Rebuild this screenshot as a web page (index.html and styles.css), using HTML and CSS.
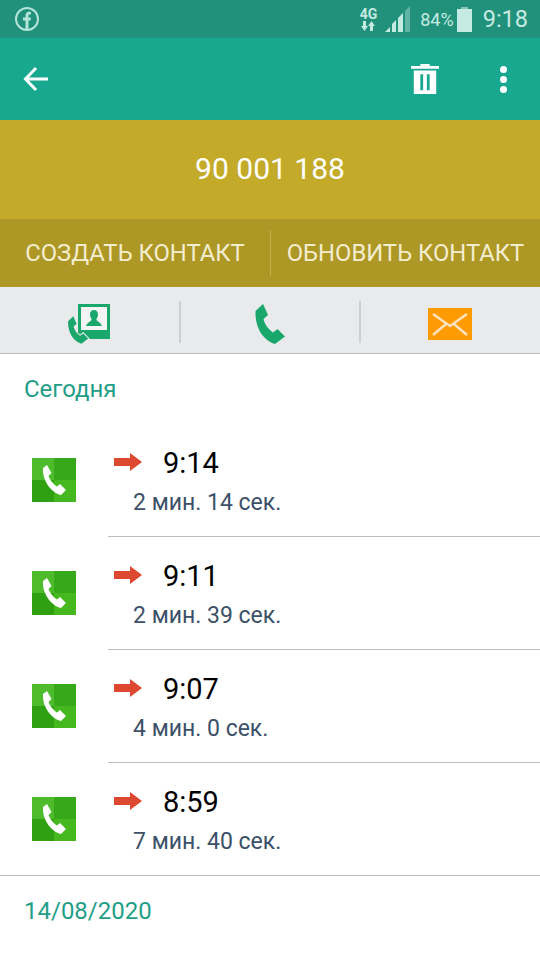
FILE: index.html
```html
<!DOCTYPE html>
<html lang="ru">
<head>
  <meta charset="UTF-8">
  <meta name="viewport" content="width=device-width, initial-scale=1.0">
  <title>Журнал вызовов</title>
  <link rel="stylesheet" href="styles.css">
</head>
<body>
  <svg class="defs" width="0" height="0">
    <symbol id="handset" viewBox="-2 -2 34 44">
      <path d="M8 0 L13 11 L8.500 15 C9.500 20 13 25 18 28.500 L22.500 25 L30 32.500 L20 40 C8 36 0 24 0.500 7 Z"/>
    </symbol>
    <symbol id="call-tile" viewBox="0 0 44 44">
      <rect width="44" height="44" fill="#3db01f"/>
      <rect width="22" height="22" fill="#4dbb2c"/>
      <rect x="22" width="22" height="22" fill="#36a91a"/>
      <rect y="22" width="22" height="22" fill="#2fa012"/>
      <rect x="22" y="22" width="22" height="22" fill="#44b81e"/>
      <path fill="#fff" d="M15 7 L19.500 15 L16.500 18 C17.500 21 21 26 25 28.500 L28 26 L34 32 L29 37 C20 35 10 23 11 10 Z"/>
    </symbol>
    <symbol id="out-arrow" viewBox="0 0 28 18">
      <path fill="#dc4830" d="M0 5 H16 V0 L28 9 L16 18 V13 H0 Z"/>
    </symbol>
  </svg>

  <div class="status-bar">
    <svg class="fb-icon" width="26" height="26" viewBox="0 0 26 26">
      <circle cx="13" cy="13" r="11" fill="none" stroke="#b5e4d9" stroke-width="2"/>
      <path fill="#b5e4d9" d="M11.500 23 V14.500 H9 V11.500 H11.500 V9.500 C11.500 7 13 5.800 15 5.800 C16 5.800 17 6 17 6 V8.500 H15.800 C14.700 8.500 14.500 9 14.500 9.800 V11.500 H17 L16.500 14.500 H14.500 V23 Z"/>
    </svg>
    <div class="status-right">
      <div class="net">
        <span class="net-label">4G</span>
        <svg width="14" height="10" viewBox="0 0 14 10">
          <path fill="#c5eae1" d="M2 0 H5 V5 H7 L3.500 10 L0 5 H2 Z M9 10 H12 V5 H14 L10.500 0 L7 5 H9 Z"/>
        </svg>
      </div>
      <svg class="signal" width="26" height="26" viewBox="0 0 26 26">
        <path fill="#c5eae1" d="M0 26 L5 21 V26 Z M7 26 V18 L11 14 V26 Z M13 26 V12 L18 7 V26 Z"/>
        <path fill="#c5eae1" fill-opacity="0.4" d="M20 26 V5 L25 0 V26 Z"/>
      </svg>
      <span class="battery-pct">84%</span>
      <div class="battery"></div>
      <span class="clock">9:18</span>
    </div>
  </div>

  <div class="toolbar">
    <svg width="26" height="26" viewBox="0 0 26 26" class="back">
      <path fill="none" stroke="#fff" stroke-width="3" d="M25 13 H3 M13 2 L2.500 13 L13 24"/>
    </svg>
    <div class="toolbar-right">
      <svg width="28" height="30" viewBox="0 0 30 32">
        <path fill="#fff" d="M10 0 H20 V2 H30 V5 H0 V2 H10 Z M3 7 H27 V32 H3 Z"/>
        <path fill="#17a88f" d="M10 11 H13 V28 H10 Z M17 11 H20 V28 H17 Z"/>
      </svg>
      <div class="dots"><i></i><i></i><i></i></div>
    </div>
  </div>

  <div class="number-band">90 001 188</div>

  <div class="contact-actions">
    <div class="contact-btn">СОЗДАТЬ КОНТАКТ</div>
    <div class="contact-btn">ОБНОВИТЬ КОНТАКТ</div>
  </div>

  <div class="quick-actions">
    <div class="quick-cell">
      <svg width="44" height="40" viewBox="0 0 44 40">
        <path fill="#1aa76c" d="M11 0 H43 V35 H11 Z"/>
        <rect x="14" y="3" width="26" height="23" fill="#f2f5f4"/>
        <path fill="#1aa76c" d="M27 6 C29.500 6 31 8 31 10.500 C31 13 29.700 14.500 29.300 15.500 C30 17.500 33.500 18 35 22 H19 C20.500 18 24 17.500 24.700 15.500 C24.300 14.500 23 13 23 10.500 C23 8 24.500 6 27 6 Z"/>
        <use href="#handset" class="handset-cut" x="-1" y="11" width="24" height="30" fill="#1aa76c"/>
      </svg>
    </div>
    <div class="quick-cell">
      <svg width="34" height="44"><use href="#handset" width="34" height="44" fill="#1aa76c"/></svg>
    </div>
    <div class="quick-cell mail-cell">
      <svg width="44" height="32" viewBox="0 0 44 32">
        <rect width="44" height="32" fill="#fe9a04"/>
        <path fill="none" stroke="#fde3bd" stroke-width="2.500" d="M5 6 L22 18 L39 6 M5 27 L18 16 M39 27 L26 16"/>
      </svg>
    </div>
  </div>

  <div class="day-label">Сегодня</div>

  <div class="call-list">
    <div class="call-row">
      <div class="call-icon"><svg width="44" height="44"><use href="#call-tile"/></svg></div>
      <div class="call-body">
        <div class="call-top"><svg width="28" height="18"><use href="#out-arrow"/></svg><span class="call-time">9:14</span></div>
        <div class="call-length">2 мин. 14 сек.</div>
      </div>
    </div>
    <div class="call-row">
      <div class="call-icon"><svg width="44" height="44"><use href="#call-tile"/></svg></div>
      <div class="call-body">
        <div class="call-top"><svg width="28" height="18"><use href="#out-arrow"/></svg><span class="call-time">9:11</span></div>
        <div class="call-length">2 мин. 39 сек.</div>
      </div>
    </div>
    <div class="call-row">
      <div class="call-icon"><svg width="44" height="44"><use href="#call-tile"/></svg></div>
      <div class="call-body">
        <div class="call-top"><svg width="28" height="18"><use href="#out-arrow"/></svg><span class="call-time">9:07</span></div>
        <div class="call-length">4 мин. 0 сек.</div>
      </div>
    </div>
    <div class="call-row last">
      <div class="call-icon"><svg width="44" height="44"><use href="#call-tile"/></svg></div>
      <div class="call-body">
        <div class="call-top"><svg width="28" height="18"><use href="#out-arrow"/></svg><span class="call-time">8:59</span></div>
        <div class="call-length">7 мин. 40 сек.</div>
      </div>
    </div>
  </div>

  <div class="day-label next">14/08/2020</div>
</body>
</html>
```

FILE: styles.css
```css
* {
  box-sizing: border-box;
}

html, body {
  height: 960px;
  overflow: hidden;
}

body {
  margin: 0;
  background: #fff;
  font-family: Roboto, "Noto Sans", sans-serif;
}

.defs {
  display: block;
  height: 0;
}

.status-bar {
  height: 38px;
  background: #21917c;
  display: flex;
  align-items: center;
  justify-content: space-between;
  padding: 0 12px 0 14px;
  color: #c5eae1;
}

.status-right {
  display: flex;
  align-items: center;
}

.net {
  display: flex;
  flex-direction: column;
  align-items: center;
  margin-right: 8px;
}

.net-label {
  font-size: 14px;
  font-weight: 700;
  line-height: 14px;
}

.signal {
  margin-right: 9px;
}

.battery-pct {
  font-size: 18px;
  margin-right: 3px;
}

.battery {
  width: 15px;
  height: 23px;
  margin-top: 2px;
  background: #c5eae1;
  position: relative;
  margin-right: 11px;
}

.battery::before {
  content: "";
  position: absolute;
  top: -2px;
  left: 4px;
  width: 7px;
  height: 2px;
  background: #c5eae1;
  opacity: 0.6;
}

.clock {
  font-size: 23.5px;
}

.toolbar {
  height: 82px;
  background: #17a88f;
  display: flex;
  align-items: center;
  justify-content: space-between;
  padding: 0 33px 0 23px;
}

.toolbar-right {
  display: flex;
  align-items: center;
  gap: 61px;
}

.dots {
  display: flex;
  flex-direction: column;
  gap: 3px;
}

.dots i {
  display: block;
  width: 7px;
  height: 7px;
  border-radius: 50%;
  background: #fff;
}

.number-band {
  height: 99px;
  padding-bottom: 2px;
  background: #c3aa29;
  color: #fff;
  font-size: 30px;
  display: flex;
  align-items: center;
  justify-content: center;
}

.contact-actions {
  height: 68px;
  background: #ad9725;
  display: flex;
  align-items: center;
}

.contact-btn {
  color: #f3edcf;
  font-size: 23.8px;
  white-space: nowrap;
  height: 46px;
  display: flex;
  align-items: center;
  justify-content: center;
  width: 270px;
}

.contact-btn + .contact-btn {
  border-left: 1px solid #c3b050;
}

.quick-actions {
  height: 67px;
  padding-top: 3px;
  background: #e8eaeb;
  border-bottom: 1px solid #bcbfc0;
  display: flex;
  align-items: center;
}

.quick-cell {
  flex: 1;
  height: 42px;
  display: flex;
  align-items: center;
  justify-content: center;
}

.quick-cell svg {
  margin-top: 4px;
}

.mail-cell svg {
  margin-right: 2px;
}

.handset-cut {
  stroke: #e8eaeb;
  stroke-width: 3px;
  paint-order: stroke;
}

.quick-cell + .quick-cell {
  border-left: 2px solid #cdcfd0;
}

.day-label {
  height: 70px;
  padding: 0 24px;
  display: flex;
  align-items: center;
  color: #1f9e87;
  font-size: 24px;
}

.day-label.next {
  height: 70px;
}

.call-row {
  height: 113px;
  display: flex;
}

.call-icon {
  width: 108px;
  padding: 0 0 1px 32px;
  display: flex;
  align-items: center;
}

.call-icon svg {
  display: block;
}

.call-body {
  flex: 1;
  border-bottom: 1px solid #bcbfc0;
  padding: 20px 0 0 6px;
}

.call-row.last {
  border-bottom: 1px solid #bcbfc0;
}

.call-row.last .call-body {
  border-bottom: none;
}

.call-top {
  display: flex;
  align-items: center;
  gap: 21px;
  height: 36px;
}

.call-time {
  font-size: 29px;
  color: #000;
  padding-top: 2px;
}

.call-length {
  margin: 9px 0 0 19px;
  font-size: 23px;
  color: #3c5068;
}
```
